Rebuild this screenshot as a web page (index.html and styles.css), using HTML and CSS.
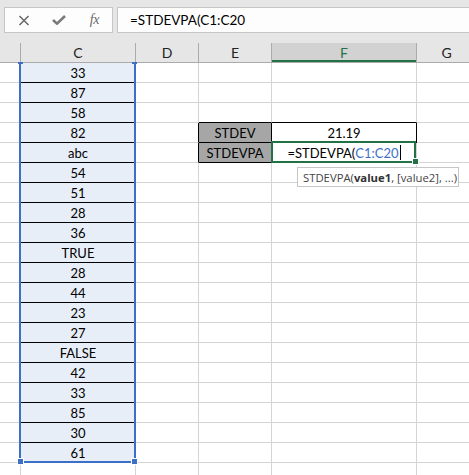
FILE: index.html
```html
<!DOCTYPE html>
<html>
<head>
<meta charset="utf-8">
<link rel="stylesheet" href="styles.css">
</head>
<body>
<div class="app">
  <div class="top">
    <div class="btns">
      <span class="ib"><svg width="12" height="11" viewBox="0 0 12 11"><path d="M1.5 1 L10.5 10 M10.5 1 L1.5 10" stroke="#6b6b6b" stroke-width="1.6" fill="none"/></svg></span>
      <span class="ib"><svg width="14" height="10" viewBox="0 0 14 10"><path d="M1 5 L5 8.6 L13 1" stroke="#7a7a7a" stroke-width="2.6" fill="none"/></svg></span>
      <span class="ib fx">fx</span>
    </div>
    <div class="formula">=STDEVPA(C1:C20</div>
  </div>
  <div class="headwrap">
    <div class="hdr">
      <div class="h"></div>
      <div class="h">C</div>
      <div class="h">D</div>
      <div class="h">E</div>
      <div class="h sel">F</div>
      <div class="h">G</div>
    </div>
  </div>
  <div class="sheet">
    <div class="c"></div><div class="c v">33</div><div class="c"></div><div class="c"></div><div class="c"></div><div class="c"></div>
    <div class="c"></div><div class="c v">87</div><div class="c"></div><div class="c"></div><div class="c"></div><div class="c"></div>
    <div class="c"></div><div class="c v">58</div><div class="c"></div><div class="c bkb"></div><div class="c bkb"></div><div class="c"></div>
    <div class="c"></div><div class="c v">82</div><div class="c bkr"></div><div class="c bkr bkb lab">STDEV</div><div class="c bkr bkb">21.19</div><div class="c"></div>
    <div class="c"></div><div class="c v">abc</div><div class="c bkr"></div><div class="c bkr bkb lab">STDEVPA</div><div class="c active"><span>=STDEVPA(</span><span class="ref">C1:C20</span><span class="caret"></span><i class="fill"></i></div><div class="c"></div>
    <div class="c"></div><div class="c v">54</div><div class="c"></div><div class="c"></div><div class="c"></div><div class="c"></div>
    <div class="c"></div><div class="c v">51</div><div class="c"></div><div class="c"></div><div class="c"></div><div class="c"></div>
    <div class="c"></div><div class="c v">28</div><div class="c"></div><div class="c"></div><div class="c"></div><div class="c"></div>
    <div class="c"></div><div class="c v">36</div><div class="c"></div><div class="c"></div><div class="c"></div><div class="c"></div>
    <div class="c"></div><div class="c v">TRUE</div><div class="c"></div><div class="c"></div><div class="c"></div><div class="c"></div>
    <div class="c"></div><div class="c v">28</div><div class="c"></div><div class="c"></div><div class="c"></div><div class="c"></div>
    <div class="c"></div><div class="c v">44</div><div class="c"></div><div class="c"></div><div class="c"></div><div class="c"></div>
    <div class="c"></div><div class="c v">23</div><div class="c"></div><div class="c"></div><div class="c"></div><div class="c"></div>
    <div class="c"></div><div class="c v">27</div><div class="c"></div><div class="c"></div><div class="c"></div><div class="c"></div>
    <div class="c"></div><div class="c v">FALSE</div><div class="c"></div><div class="c"></div><div class="c"></div><div class="c"></div>
    <div class="c"></div><div class="c v">42</div><div class="c"></div><div class="c"></div><div class="c"></div><div class="c"></div>
    <div class="c"></div><div class="c v">33</div><div class="c"></div><div class="c"></div><div class="c"></div><div class="c"></div>
    <div class="c"></div><div class="c v">85</div><div class="c"></div><div class="c"></div><div class="c"></div><div class="c"></div>
    <div class="c"></div><div class="c v">30</div><div class="c"></div><div class="c"></div><div class="c"></div><div class="c"></div>
    <div class="c"></div><div class="c v">61</div><div class="c"></div><div class="c"></div><div class="c"></div><div class="c"></div>
    <div class="c"></div><div class="c"></div><div class="c"></div><div class="c"></div><div class="c"></div><div class="c"></div>

    <div class="range">
      <i class="tick tl"></i><i class="tick tr"></i>
      <i class="sq bl"></i><i class="sq br"></i>
    </div>
    <div class="tip">STDEVPA(<b>value1</b>, [value2], ...)</div>
  </div>
</div>
</body>
</html>
```

FILE: styles.css
```css
html, body {
  margin: 0;
  padding: 0;
  background: #ffffff;
}
.app {
  width: 469px;
  height: 475px;
  overflow: hidden;
  font-family: Lato, "Liberation Sans", sans-serif;
  font-size: 13px;
  color: #000;
}
.top {
  height: 33px;
  box-sizing: border-box;
  padding: 7px 0 0 4px;
  background: #e6e6e6;
  display: flex;
  gap: 4px;
}
.btns {
  width: 109px;
  height: 26px;
  box-sizing: border-box;
  border: 1px solid #c6c6c6;
  background: #fdfdfd;
  display: flex;
  align-items: center;
  padding-left: 1px;
}
.ib {
  width: 36px;
  display: flex;
  justify-content: center;
  align-items: center;
}
.fx {
  font-family: "Liberation Serif", serif;
  font-style: italic;
  font-size: 14px;
  color: #6b6b6b;
  letter-spacing: -0.5px;
}
.formula {
  flex: 1;
  height: 26px;
  box-sizing: border-box;
  border: 1px solid #c6c6c6;
  border-right: none;
  background: #fdfdfd;
  padding-left: 12px;
  display: flex;
  align-items: center;
  margin-right: -10px;
  font-size: 13.5px;
}
.headwrap {
  background: #e6e6e6;
  padding-top: 10px;
}
.hdr {
  display: grid;
  grid-template-columns: 21px 115px 63px 73px 145px 60px;
  height: 20px;
  box-sizing: border-box;
  border-bottom: 1px solid #ababab;
}
.h {
  border-right: 1px solid #ababab;
  display: flex;
  align-items: center;
  justify-content: center;
  color: #222;
  font-size: 14px;
}
.h.sel {
  background: #d2d2d2;
  color: #217346;
  box-shadow: inset 0 -2px 0 #217346;
}
.sheet {
  position: relative;
  display: grid;
  grid-template-columns: 21px 115px 63px 73px 145px 60px;
  grid-auto-rows: 20px;
}
.c {
  box-sizing: border-box;
  border-right: 1px solid #d4d4d4;
  border-bottom: 1px solid #d4d4d4;
  display: flex;
  align-items: center;
  justify-content: center;
  white-space: nowrap;
}
.c.v {
  background: #e8eef8;
  border-bottom-color: #000;
}
.c.bkb { border-bottom-color: #000; }
.c.bkr { border-right-color: #000; }
.c.lab { background: #a6a6a6; }
.c.active {
  position: relative;
}
.c.active::after {
  content: "";
  position: absolute;
  left: -1px;
  top: -2px;
  right: 0;
  bottom: -1px;
  border: 2px solid #217346;
}
.ref { color: #3d6fc6; }
.caret {
  display: inline-block;
  width: 1px;
  height: 15px;
  background: #000;
  margin-left: 1px;
}
.fill {
  position: absolute;
  right: -3px;
  bottom: -3px;
  width: 5px;
  height: 5px;
  background: #217346;
  border: 1px solid #fff;
  z-index: 2;
}
.range {
  position: absolute;
  left: 19px;
  top: 0;
  width: 117px;
  height: 400px;
  box-sizing: border-box;
  border-left: 2px solid #3d6fc6;
  border-right: 2px solid #3d6fc6;
  border-bottom: 2px solid #3d6fc6;
}
.tick {
  position: absolute;
  top: -1px;
  width: 5px;
  height: 2px;
  background: #3d6fc6;
}
.tick.tl { left: -3px; }
.tick.tr { right: -3px; }
.sq {
  position: absolute;
  bottom: -4px;
  width: 5px;
  height: 5px;
  background: #3d6fc6;
  border: 1px solid #fff;
}
.sq.bl { left: -4px; }
.sq.br { right: -4px; }
.tip {
  position: absolute;
  left: 297px;
  top: 104px;
  width: 162px;
  height: 20px;
  box-sizing: border-box;
  border: 1px solid #c6c6c6;
  background: #fff;
  font-family: "Open Sans", "Noto Sans", sans-serif;
  font-size: 11.3px;
  color: #444;
  display: flex;
  align-items: center;
  padding-left: 5px;
  white-space: nowrap;
}
.tip b { font-weight: 700; color: #333; }
```
